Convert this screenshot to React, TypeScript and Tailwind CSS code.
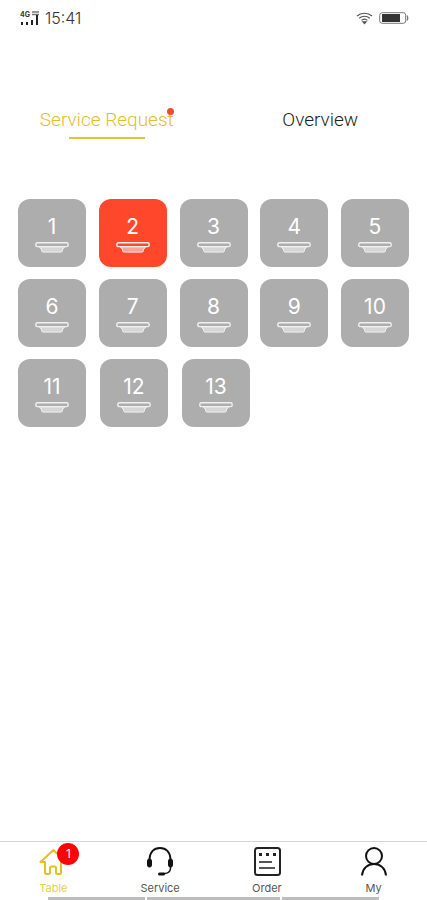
import { FC, ReactNode, useState } from "react";

interface TableTileProps {
  number: number;
  calling?: boolean;
}

interface NavItem {
  label: string;
  icon: ReactNode;
  active?: boolean;
  badge?: number;
}

const rows = [
  [1, 2, 3, 4, 5],
  [6, 7, 8, 9, 10],
  [11, 12, 13],
];

const callingTables = [2];

// Status bar
const StatusBar = () => (
  <header className="flex h-9 items-center justify-between pl-[19px] pr-[18px]">
    <div className="flex items-center gap-1">
      <svg width="22" height="20" viewBox="0 0 22 20" aria-hidden="true">
        <text x="1" y="9" fontSize="7" fontWeight="700" fill="#333">
          4G
        </text>
        <path d="M13 4h7M13 6.500h7" stroke="#777" strokeWidth="1.300" />
        <path
          d="M3 17v-3M8 17v-3M13 17v-5M18 17V7"
          stroke="#222"
          strokeWidth="2"
        />
      </svg>
      <span className="text-base font-light leading-5 text-[#333]">15:41</span>
    </div>
    <div className="flex items-center gap-[6px]">
      <svg
        width="17"
        height="13"
        viewBox="0 0 17 13"
        fill="none"
        stroke="#555"
        strokeWidth="1.2"
        aria-hidden="true"
      >
        <path d="M1 4C5 .3 12 .3 16 4M3.200 6.200c3-2.600 7.600-2.600 10.600 0M5.500 8.400c1.800-1.600 4.200-1.600 6 0" />
        <path d="M7 9.800h3l-1.500 1.700z" fill="#555" />
      </svg>
      <svg width="30" height="12" viewBox="0 0 30 12" aria-hidden="true">
        <rect x=".7" y=".7" width="26" height="10.600" rx="2.500" fill="#fff" stroke="#777" />
        <rect x="3" y="2" width="18" height="8" fill="#333" />
        <path d="M28 3.500q1.500 2.500 0 5" fill="none" stroke="#777" strokeWidth="1.300" />
      </svg>
    </div>
  </header>
);

// Table tiles
const TableTile: FC<TableTileProps> = ({ number, calling }) => (
  <button
    className={`flex h-[68px] w-[68px] flex-col items-center rounded-xl pt-[14px] text-white ${
      calling ? "bg-[#ff472b]" : "bg-[#adadad]"
    }`}
  >
    <span className="text-[21px] leading-7">{number}</span>
    <svg
      className="mt-[1px]"
      width="34"
      height="11"
      viewBox="0 0 34 11"
      fill="none"
      stroke="#f0f0f0"
      strokeLinejoin="round"
      aria-hidden="true"
    >
      <rect x=".8" y=".8" width="32.400" height="3.800" rx="1.600" strokeWidth="1.400" />
      <path
        d="M4.500 4.600q0 2 2 2.200v1.700q0 1.600 1.700 1.600h17.600q1.700 0 1.700-1.600V6.800q2-.2 2-2.200z"
        fill="#fff"
        fillOpacity=".5"
      />
    </svg>
  </button>
);

// Bottom navigation icons
const HomeIcon = () => (
  <svg width="28" height="30" viewBox="0 0 28 30" fill="none" stroke="#e6bf20" strokeWidth="2" strokeLinejoin="round">
    <path d="M14.500 4 1.500 16H6v10.500q0 1.500 1.500 1.500h2q1.500 0 1.500-1.500V22q0-1.500 1.500-1.500h3q1.500 0 1.500 1.500v4.500q0 1.500 1.500 1.500h2q1.500 0 1.500-1.500V16h4.500z" />
  </svg>
);

const HeadsetIcon = () => (
  <svg width="28" height="30" viewBox="0 0 28 30" fill="none" stroke="#111" strokeWidth="2">
    <path d="M3.500 13C4 6 8 2 14 2s10 4 10.500 11" />
    <path d="M24.500 20v2.500q-.5 4.500-5.500 5h-2" strokeWidth="1.500" />
    <rect x="1.500" y="13" width="4" height="8" rx="1.800" fill="#111" strokeWidth="1" />
    <rect x="22.500" y="13" width="4" height="8" rx="1.800" fill="#111" strokeWidth="1" />
    <path d="M13.500 28h4" strokeWidth="3" strokeLinecap="round" />
  </svg>
);

const OrderIcon = () => (
  <svg width="28" height="30" viewBox="0 0 28 30" fill="none" stroke="#222" strokeWidth="2">
    <rect x="2" y="2" width="25" height="27" rx="2.500" />
    <path d="M6 8.500h3M13 8.500h3M20 8.500h3" strokeWidth="3" />
    <path d="M6 16h13M6 22h16" stroke="#555" />
  </svg>
);

const PersonIcon = () => (
  <svg width="28" height="30" viewBox="0 0 28 30" fill="none" stroke="#111" strokeWidth="2">
    <circle cx="14" cy="10" r="8" />
    <path d="M2 29.500C2.500 22.500 7.500 18 14 18s11.500 4.500 12 11.500" />
  </svg>
);

const navItems: NavItem[] = [
  { label: "Table", icon: <HomeIcon />, active: true, badge: 1 },
  { label: "Service", icon: <HeadsetIcon /> },
  { label: "Order", icon: <OrderIcon /> },
  { label: "My", icon: <PersonIcon /> },
];

const BottomNav = () => (
  <footer className="border-t border-[#d4d4d4]">
    <nav className="grid h-[55px] grid-cols-4">
      {navItems.map((item) => (
        <a
          key={item.label}
          href={`#${item.label.toLowerCase()}`}
          className={`flex flex-col items-center pt-1 text-[11px] leading-4 ${
            item.active ? "text-[#e6d052]" : "text-[#555]"
          }`}
        >
          <span className="relative flex h-[34px] items-start">
            {item.icon}
            {item.badge && (
              <span className="absolute -right-3 -top-[3px] flex h-[22px] w-[22px] items-center justify-center rounded-full bg-[#fa0505] text-xs text-white">
                {item.badge}
              </span>
            )}
          </span>
          <span>{item.label}</span>
        </a>
      ))}
    </nav>
    <div className="mx-12 grid h-[3px] grid-cols-[97fr_134fr_97fr] gap-[2px]">
      <span className="bg-[#bdbdbd]" />
      <span className="bg-[#bdbdbd]" />
      <span className="bg-[#bdbdbd]" />
    </div>
  </footer>
);

export default function App() {
  const [tab, setTab] = useState("request");

  return (
    <div className="flex min-h-screen flex-col bg-white font-['Inter','Liberation_Sans',sans-serif]">
      <StatusBar />

      <div
        className="mt-[70px] grid grid-cols-2 font-['Roboto','Liberation_Sans',sans-serif] text-[19px] font-light leading-7"
        role="tablist"
      >
        <button
          role="tab"
          aria-selected={tab === "request"}
          onClick={() => setTab("request")}
          className={`flex flex-col items-center ${
            tab === "request" ? "text-[#e3bd2e]" : "text-[#222]"
          }`}
        >
          <span className="relative">
            Service Request
            <span className="absolute right-0 top-[2px] h-[7px] w-[7px] rounded-full bg-[#f04a30]" />
          </span>
          <span
            className={`mt-[3px] h-[2px] w-[76px] ${
              tab === "request" ? "bg-[#e6c23c]" : "bg-transparent"
            }`}
          />
        </button>
        <button
          role="tab"
          aria-selected={tab === "overview"}
          onClick={() => setTab("overview")}
          className={`flex flex-col items-center ${
            tab === "overview" ? "text-[#e3bd2e]" : "text-[#222]"
          }`}
        >
          <span>Overview</span>
          <span
            className={`mt-[3px] h-[2px] w-[76px] ${
              tab === "overview" ? "bg-[#e6c23c]" : "bg-transparent"
            }`}
          />
        </button>
      </div>

      <main className="mt-[60px] flex flex-1 flex-col gap-3 px-[18px]">
        {rows.map((row) => (
          <div
            key={row[0]}
            className={`flex ${row.length === 5 ? "justify-between" : "gap-[14px]"}`}
          >
            {row.map((n) => (
              <TableTile key={n} number={n} calling={callingTables.includes(n)} />
            ))}
          </div>
        ))}
      </main>

      <BottomNav />
    </div>
  );
}
